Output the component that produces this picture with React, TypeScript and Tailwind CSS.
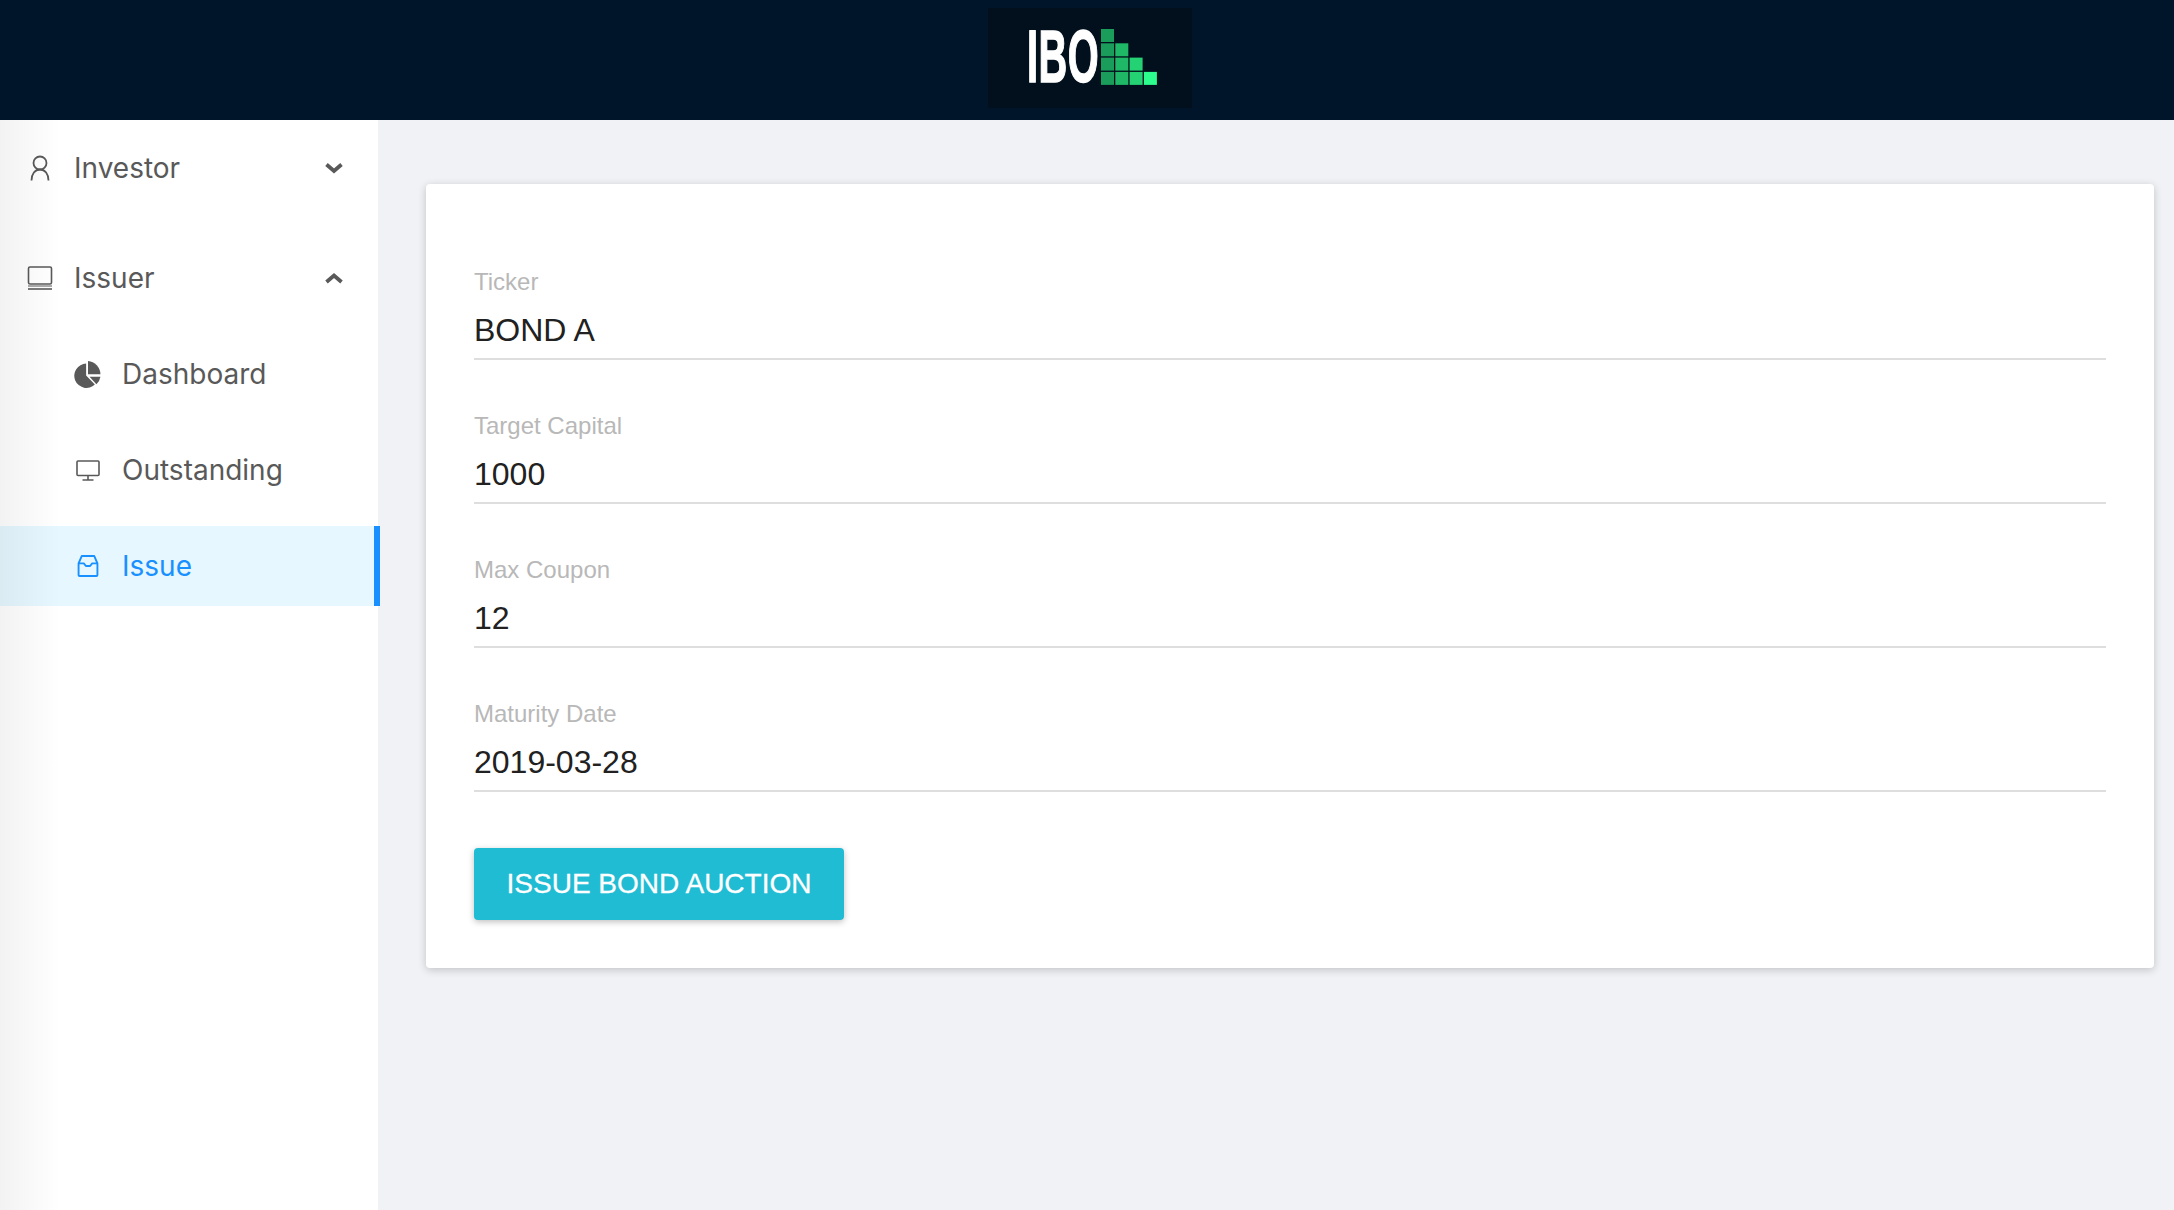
import React from 'react';

const fields = [
  { label: 'Ticker', value: 'BOND A' },
  { label: 'Target Capital', value: '1000' },
  { label: 'Max Coupon', value: '12' },
  { label: 'Maturity Date', value: '2019-03-28' },
];

const bars = [
  { x: 0, rows: [0, 1, 2, 3], fill: '#1a9c5b' },
  { x: 14.3, rows: [1, 2, 3], fill: '#1fb866' },
  { x: 28.6, rows: [2, 3], fill: '#24d274' },
  { x: 42.9, rows: [3], fill: '#2dfd8c' },
];

const Logo: React.FC = () => (
  <div className="w-[204px] h-[100px] ml-[6px] bg-[#020f1c] flex items-start pl-[39px] pt-[16px]">
    <span className="block w-[73px] h-[64px] text-white font-bold text-[75px] leading-[64px] font-['Liberation_Sans',sans-serif] origin-left scale-x-[0.53] tracking-[1px] [-webkit-text-stroke:1.5px_white] whitespace-nowrap">
      IBO
    </span>
    <svg width="56" height="56" viewBox="0 0 56 56" className="mt-[5px] ml-[1px]">
      {bars.map((bar) =>
        bar.rows.map((row) => (
          <rect key={`${bar.x}-${row}`} x={bar.x} y={row * 14.3} width="13" height="13" fill={bar.fill} />
        )),
      )}
    </svg>
  </div>
);

const Chevron: React.FC<{ up?: boolean }> = ({ up }) => (
  <svg width="18" height="12" viewBox="0 0 18 12" fill="none" className="text-[#595959]">
    <path d={up ? 'M1.500 10L9 3.500 16.500 10' : 'M1.500 2.500L9 9 16.500 2.500'} stroke="currentColor" strokeWidth="3.800" />
  </svg>
);

const UserIcon: React.FC = () => (
  <svg width="20" height="26" viewBox="0 0 20 26" fill="none" stroke="currentColor" strokeWidth="1.800">
    <circle cx="10" cy="8" r="6.500" />
    <path d="M1.500 25.500C1.500 19 5 14.500 10 14.500s8.500 4.500 8.500 11" />
  </svg>
);

const LaptopIcon: React.FC = () => (
  <svg width="26" height="24" viewBox="0 0 26 24" fill="none" stroke="currentColor" strokeWidth="1.600">
    <rect x="1.500" y="1" width="23" height="17" rx="1.500" />
    <path d="M1 20h24" strokeWidth="1" />
    <path d="M1 23h24" strokeWidth="1.600" />
  </svg>
);

const PieIcon: React.FC = () => (
  <svg width="30" height="31" viewBox="40 22 90 94" fill="currentColor">
    <path d="M79 34A39 39 0 1 0 107 101L79 72Z" />
    <path d="M85 26A43 43 0 0 1 125 68H85Z" />
    <path d="M90 76H125A40 40 0 0 1 112 100Z" />
  </svg>
);

const DesktopIcon: React.FC = () => (
  <svg width="24" height="21" viewBox="0 0 24 21" fill="none" stroke="currentColor" strokeWidth="1.600">
    <rect x="1" y="1" width="22" height="14.500" rx="1" />
    <path d="M12 15.500V20M6.500 20h11" />
  </svg>
);

const InboxIcon: React.FC = () => (
  <svg width="22" height="22" viewBox="0 0 20 21" fill="none" stroke="currentColor" strokeWidth="1.800" strokeLinejoin="round">
    <path d="M4 1H16L19 8V19A1 1 0 0 1 18 20H2A1 1 0 0 1 1 19V8Z" />
    <path d="M1 8H6L8 10.500H12L14 8H19" />
  </svg>
);

const MenuGroup: React.FC<{ icon: React.ReactNode; label: string; up?: boolean }> = ({ icon, label, up }) => (
  <div className="h-[80px] flex items-center justify-between pl-[26px] pr-[35px] mb-[30px]">
    <div className="flex items-center">
      <span className="w-[28px] flex justify-center mr-[20px]">{icon}</span>
      <span>{label}</span>
    </div>
    <Chevron up={up} />
  </div>
);

const SubItem: React.FC<{ icon: React.ReactNode; label: string; active?: boolean }> = ({ icon, label, active }) => (
  <div
    className={
      active
        ? 'relative w-[380px] h-[80px] flex items-center pl-[74px] bg-[#e6f7ff] text-[#1890ff] border-r-[6px] border-[#1890ff]'
        : 'h-[80px] flex items-center pl-[74px] mb-[16px]'
    }
  >
    <span className="w-[28px] flex justify-center mr-[20px]">{icon}</span>
    <span>{label}</span>
  </div>
);

const Field: React.FC<{ label: string; value: string }> = ({ label, value }) => (
  <div className="h-[96px] border-b-2 border-[#dedede] font-['Liberation_Sans',sans-serif]">
    <div className="text-[24px] leading-[36px] text-[#b8b8b8]">{label}</div>
    <div className="text-[32px] leading-[40px] mt-[10px] text-[#212121]">{value}</div>
  </div>
);

export default function App() {
  return (
    <div className="w-[2174px] h-[1210px] overflow-hidden flex flex-col bg-[#f0f2f5]">
      <header className="h-[120px] shrink-0 bg-[#001529] flex justify-center pt-[8px]">
        <Logo />
      </header>
      <div className="flex flex-1">
        <aside className="relative w-[378px] shrink-0 bg-white text-[#595959] text-[28px] font-['Inter',sans-serif] pt-[8px]">
          <MenuGroup icon={<UserIcon />} label="Investor" />
          <MenuGroup icon={<LaptopIcon />} label="Issuer" up />
          <div className="-mt-[14px]">
            <SubItem icon={<PieIcon />} label="Dashboard" />
            <SubItem icon={<DesktopIcon />} label="Outstanding" />
            <SubItem icon={<InboxIcon />} label="Issue" active />
          </div>
          <div className="absolute inset-y-0 left-0 w-[60px] bg-gradient-to-r from-black/5 to-transparent pointer-events-none" />
        </aside>
        <main className="flex-1 pl-[48px] pr-[20px] pt-[64px]">
          <section className="h-[784px] bg-white rounded-[4px] px-[48px] pt-[80px] shadow-[0_2px_8px_rgba(0,0,0,0.2)]">
            <div className="flex flex-col gap-[48px]">
              {fields.map((f) => (
                <Field key={f.label} label={f.label} value={f.value} />
              ))}
            </div>
            <button
              type="button"
              className="mt-[56px] w-[370px] h-[72px] bg-[#20bcd4] text-white text-[28px] rounded-[4px] shadow-[0_2px_6px_rgba(0,0,0,0.25)] font-['Liberation_Sans',sans-serif] [-webkit-text-stroke:0.3px_white]"
            >
              ISSUE BOND AUCTION
            </button>
          </section>
        </main>
      </div>
    </div>
  );
}
